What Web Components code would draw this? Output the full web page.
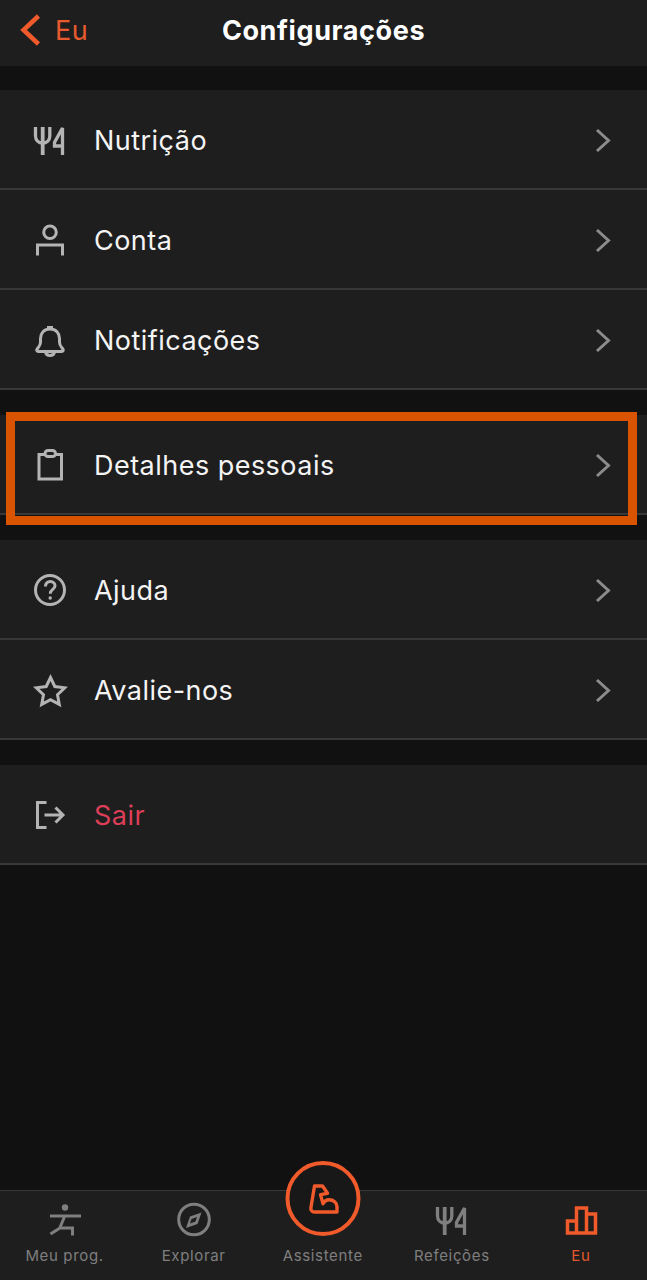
<!DOCTYPE html>
<html lang="pt">
<head>
<meta charset="utf-8">
<title>Configurações</title>
<style>
  html, body { margin: 0; background: #111111; }
  body { font-family: Inter, "Liberation Sans", sans-serif; }
</style>
</head>
<body>
<settings-screen>
  <settings-header title-text="Configurações" back-text="Eu"></settings-header>

  <settings-group>
    <settings-row icon="fork" label="Nutrição"></settings-row>
    <settings-row icon="person" label="Conta"></settings-row>
    <settings-row icon="bell" label="Notificações"></settings-row>
  </settings-group>
  <settings-group>
    <settings-row icon="clipboard" label="Detalhes pessoais" highlighted></settings-row>
  </settings-group>
  <settings-group>
    <settings-row icon="help" label="Ajuda"></settings-row>
    <settings-row icon="star" label="Avalie-nos"></settings-row>
  </settings-group>
  <settings-group>
    <settings-row icon="exit" label="Sair" danger no-chevron></settings-row>
  </settings-group>

  <tab-bar slot="footer">
    <tab-item icon="yoga" label="Meu prog."></tab-item>
    <tab-item icon="compass" label="Explorar"></tab-item>
    <tab-item icon="muscle" label="Assistente" raised></tab-item>
    <tab-item icon="fork" label="Refeições"></tab-item>
    <tab-item icon="bars" label="Eu" active></tab-item>
  </tab-bar>
</settings-screen>

<script>
// every icon keeps the coordinates it was measured at, the viewBox crops it to 36x36
const ICONS = {
  fork: ['32 122 36 36', `
    <path stroke-width="3.300" d="M35.500 127V136C35.500 140.500 39 143 42.700 143S49.800 140.500 49.800 136V127"/>
    <path stroke-width="3.800" d="M42.700 127V155"/>
    <path stroke-width="3.300" d="M62.500 155V128L54.500 142.500v3.500H62.500"/>`],
  person: ['32 222 36 36', `
    <circle cx="50" cy="232.300" r="6.300"/>
    <path d="M37.500 255.500V245H62.500V255.500"/>`],
  bell: ['32 322 36 36', `
    <path d="M50 329c-6 0-9.500 4.300-9.500 9.500v4c0 3-2.500 5.200-3.500 6.800-.7 1.200 0 2.200 1.200 2.200h23.600c1.200 0 1.900-1 1.200-2.200-1-1.600-3.500-3.800-3.500-6.800v-4c0-5.200-3.500-9.500-9.500-9.500z"/>
    <path d="M47 327.500h6M45.500 352c.5 4.500 8.500 4.500 9 0"/>`],
  clipboard: ['32 447 36 36', `
    <path d="M45 454.500H39V479H61.500V454.500H55.500"/>
    <rect x="45" y="450.500" width="10.500" height="6" rx="3"/>`],
  help: ['32 572 36 36', `
    <circle cx="50" cy="590" r="14.500"/>
    <path d="M45.500 586.500c0-3 2-5 4.800-5s4.700 2 4.700 4.300c0 3.700-4.800 3.700-4.800 8"/>
    <circle cx="50.200" cy="598" r="1.700" fill="currentColor" stroke="none"/>`],
  star: ['32 672 36 36', `
    <path stroke-linejoin="miter" d="M50.500 677.500l4.300 9 9.900 1.300-7.200 6.900 1.800 9.700-8.800-4.700-8.800 4.700 1.800-9.700-7.200-6.900 9.900-1.300z"/>`],
  exit: ['32 797 36 36', `
    <path d="M46.500 802.500H37.500V827.500H46.500"/>
    <path d="M44.500 815H62.500M55.500 807.500l7.500 7.500-7.500 7.500"/>`],
  chevron: ['594 452 18 26', `<path d="M597 455l11.500 10.500L597 476"/>`],
  back: ['18 10 26 40', `<path d="M38.500 16L23.500 30l15 14"/>`],
  yoga: ['47 1202.500 36 36', `
    <circle cx="65" cy="1208" r="3.200" fill="currentColor" stroke="none"/>
    <path d="M50 1216.500H81M64.800 1216.500L60 1228M50.500 1234.500L60 1228.500H72.500V1236"/>`],
  compass: ['176 1202.500 36 36', `
    <circle cx="194" cy="1220" r="15.300"/>
    <path fill="currentColor" fill-rule="evenodd" stroke="none" d="M201.500 1213l-4 11.500-11.500 4 4-11.500zM197 1217.500l-5.500 2-1.500 4.500 5.500-2z"/>`],
  muscle: ['305.500 1180 36 36', `
    <path stroke-width="3.400" stroke-linejoin="round" d="M314.500 1185h8l5 7.300-7 1.300 2.500 9.200c1.300-2.500 3.500-4 6-4 4.500 0 8 3 8 7v5.200h-22.500c-2.500 0-4-2-3.600-4.200z"/>`],
  bars: ['563 1202.500 36 36', `
    <path d="M567.500 1233.500V1221.500H576.500V1233.500zM576.500 1233.500V1208.500H586.500V1233.500zM586.500 1233.500V1214.500H595.500V1233.500z"/>`]
};

class UiIcon extends HTMLElement {
  connectedCallback() {
    const [box, body] = ICONS[this.getAttribute('name')];
    const [, , w, h] = box.split(' ');
    const stroke = this.getAttribute('stroke') || '3';
    this.attachShadow({ mode: 'open' }).innerHTML = `
      <style>
        :host { display: block; width: ${w}px; height: ${h}px; flex: none; }
        svg { display: block; overflow: visible; }
      </style>
      <svg width="${w}" height="${h}" viewBox="${box}" fill="none" stroke="currentColor" stroke-width="${stroke}">${body}</svg>`;
  }
}

class SettingsScreen extends HTMLElement {
  constructor() {
    super();
    this.attachShadow({ mode: 'open' }).innerHTML = `
      <style>
        :host { display: flex; flex-direction: column; height: 1280px; overflow: hidden; background: #111111; }
        .foot { margin-top: auto; }
      </style>
      <slot></slot>
      <div class="foot"><slot name="footer"></slot></div>`;
  }
}

class SettingsHeader extends HTMLElement {
  connectedCallback() {
    this.attachShadow({ mode: 'open' }).innerHTML = `
      <style>
        :host { display: grid; grid-template-columns: 1fr auto 1fr; align-items: center; height: 66px; box-sizing: border-box;
                padding-bottom: 6px; background: #1e1e1e; }
        .back { display: flex; align-items: center; gap: 11px; padding-left: 18px; color: #f15a2b; font-size: 27px; letter-spacing: .45px; }
        .back span { color: #e95a2e; }
        h1 { margin: 0; font-size: 27px; font-weight: 700; letter-spacing: .6px; color: #fff; }
      </style>
      <div class="back"><ui-icon name="back" stroke="4.500"></ui-icon><span>${this.getAttribute('back-text')}</span></div>
      <h1>${this.getAttribute('title-text')}</h1>
      <div></div>`;
  }
}

class SettingsGroup extends HTMLElement {
  constructor() {
    super();
    this.attachShadow({ mode: 'open' }).innerHTML = `
      <style>
        :host { display: block; margin-top: 25px; }
        :host(:first-of-type) { margin-top: 24px; }
      </style>
      <slot></slot>`;
  }
}

class SettingsRow extends HTMLElement {
  connectedCallback() {
    const chevron = this.hasAttribute('no-chevron') ? '' :
      '<ui-icon class="chev" name="chevron"></ui-icon>';
    this.attachShadow({ mode: 'open' }).innerHTML = `
      <style>
        :host { display: flex; position: relative; align-items: center; height: 100px; box-sizing: border-box;
                padding: 2px 35px 0 32px; background: #1e1e1e; border-bottom: 2px solid #383838; }
        :host([highlighted])::after { content: ""; position: absolute; left: 6px; right: 10px; top: -3px; bottom: -12px;
                border: 9px solid #d95400; box-sizing: border-box; }
        .icon { color: #b4b4b4; }
        .label { flex: 1; margin-left: 26px; padding-top: 2px; font-size: 27px; line-height: 32px; letter-spacing: .47px; color: #f4f4f4; }
        :host([danger]) .label { color: #dc3f57; }
        .chev { color: #8c8c8c; }
      </style>
      <ui-icon class="icon" name="${this.getAttribute('icon')}"></ui-icon>
      <span class="label">${this.getAttribute('label')}</span>
      ${chevron}`;
  }
}

class TabBar extends HTMLElement {
  constructor() {
    super();
    this.attachShadow({ mode: 'open' }).innerHTML = `
      <style>
        :host { display: grid; grid-template-columns: repeat(5, 1fr); height: 90px; box-sizing: border-box; padding-right: 1.500px;
                background: #1e1e1e; border-top: 1px solid #383838; }
      </style>
      <slot></slot>`;
  }
}

class TabItem extends HTMLElement {
  connectedCallback() {
    const name = this.getAttribute('icon');
    const raised = this.hasAttribute('raised');
    const icon = raised
      ? `<div class="ring"><ui-icon name="${name}"></ui-icon></div><div class="spacer"></div>`
      : `<ui-icon name="${name}"${name === 'bars' ? ' stroke="3.500"' : ''}></ui-icon>`;
    this.attachShadow({ mode: 'open' }).innerHTML = `
      <style>
        :host { display: flex; position: relative; flex-direction: column; align-items: center; padding-top: 11px; color: #7f7f7f; }
        :host([active]) { color: #f15a2b; }
        .label { margin-top: 8px; font-size: 15px; line-height: 20px; letter-spacing: .65px; white-space: nowrap; }
        :host([active]) .label { color: #e4572c; }
        .spacer { height: 36px; }
        .ring { position: absolute; top: -30px; left: calc(50% + .75px); transform: translateX(-50%); width: 75px; height: 75px;
                box-sizing: border-box; border: 4px solid #f15a2b; border-radius: 50%; background: #181818;
                display: flex; align-items: center; justify-content: center; color: #f15a2b; }
      </style>
      ${icon}
      <span class="label">${this.getAttribute('label')}</span>`;
  }
}

customElements.define('ui-icon', UiIcon);
customElements.define('settings-screen', SettingsScreen);
customElements.define('settings-header', SettingsHeader);
customElements.define('settings-group', SettingsGroup);
customElements.define('settings-row', SettingsRow);
customElements.define('tab-bar', TabBar);
customElements.define('tab-item', TabItem);
</script>
</body>
</html>
